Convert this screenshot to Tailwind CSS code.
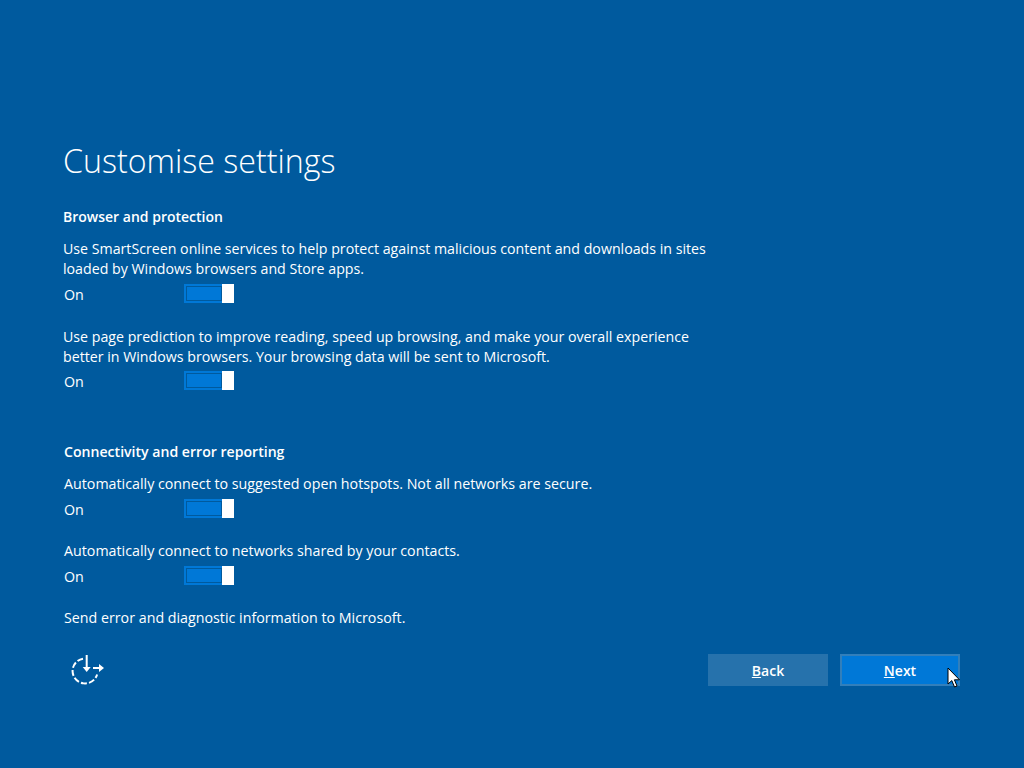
<!DOCTYPE html>
<html lang="en-GB">
<head>
  <meta charset="UTF-8">
  <title>Customise settings</title>
  <script src="https://cdn.jsdelivr.net/npm/@tailwindcss/browser@4"></script>
</head>
<body class="bg-[#005a9e] text-white font-['Open_Sans','Noto_Sans',sans-serif] w-[1024px] h-[768px] overflow-hidden relative">
  <div class="pt-[139px] pl-[63px] w-[723px]">
    <h1 class="text-[32.2px] leading-[44px] font-light">Customise settings</h1>

    <!-- Browser and protection -->
    <h2 class="mt-[24px] text-[14px] leading-[20px] font-semibold">Browser and protection</h2>
    <p class="mt-[12px] text-[14.2px] leading-[20px]">Use SmartScreen online services to help protect against malicious content and downloads in sites loaded by Windows browsers and Store apps.</p>
    <div class="flex items-start h-[20px] mt-[5px]">
      <span class="w-[121px] pt-px text-[14.25px] leading-[20px] pl-px">On</span>
      <div class="w-[50px] h-[19px] flex border-2 border-[#0078d7] border-r-0">
        <div class="flex-1 bg-[#0078d7] border border-[#005a9e]"></div>
        <div class="w-[12px] bg-white -my-[2px]"></div>
      </div>
    </div>
    <p class="mt-[23px] text-[14.2px] leading-[20px]">Use page prediction to improve reading, speed up browsing, and make your overall experience better in Windows browsers. Your browsing data will be sent to Microsoft.</p>
    <div class="flex items-start h-[20px] mt-[4px]">
      <span class="w-[121px] pt-px text-[14.25px] leading-[20px] pl-px">On</span>
      <div class="w-[50px] h-[19px] flex border-2 border-[#0078d7] border-r-0">
        <div class="flex-1 bg-[#0078d7] border border-[#005a9e]"></div>
        <div class="w-[12px] bg-white -my-[2px]"></div>
      </div>
    </div>

    <!-- Connectivity and error reporting -->
    <div class="pl-px">
      <h2 class="mt-[51px] text-[14.1px] leading-[20px] font-semibold">Connectivity and error reporting</h2>
      <p class="mt-[12px] text-[14.25px] leading-[20px]">Automatically connect to suggested open hotspots. Not all networks are secure.</p>
      <div class="flex items-start h-[20px] mt-[5px]">
        <span class="w-[120px] pt-px text-[14.25px] leading-[20px]">On</span>
        <div class="w-[50px] h-[19px] flex border-2 border-[#0078d7] border-r-0">
          <div class="flex-1 bg-[#0078d7] border border-[#005a9e]"></div>
          <div class="w-[12px] bg-white -my-[2px]"></div>
        </div>
      </div>
      <p class="mt-[22px] text-[14.25px] leading-[20px]">Automatically connect to networks shared by your contacts.</p>
      <div class="flex items-start h-[20px] mt-[5px]">
        <span class="w-[120px] pt-px text-[14.25px] leading-[20px]">On</span>
        <div class="w-[50px] h-[19px] flex border-2 border-[#0078d7] border-r-0">
          <div class="flex-1 bg-[#0078d7] border border-[#005a9e]"></div>
          <div class="w-[12px] bg-white -my-[2px]"></div>
        </div>
      </div>
      <p class="mt-[22px] text-[14.25px] leading-[20px]">Send error and diagnostic information to Microsoft.</p>
    </div>
  </div>

  <!-- Footer -->
  <div class="absolute left-[63px] right-[64px] top-[654px] h-[32px] flex items-center">
    <svg class="w-[44px] h-[32px]" viewBox="0 0 44 32" fill="none" stroke="white" stroke-width="2">
      <path d="M20 4.66A12.5 12.5 0 1 0 34.1 20.4" stroke-dasharray="6 2.2"/>
      <path d="M23.7 1V15"/>
      <path d="M19.7 13H27.7L23.7 18Z" fill="white" stroke="none"/>
      <path d="M30 14H38"/>
      <path d="M36 10V18L41 14Z" fill="white" stroke="none"/>
    </svg>
    <button class="ml-auto w-[120px] h-[32px] bg-white/15 text-[14px] font-semibold"><u>B</u>ack</button>
    <button class="ml-[12px] w-[120px] h-[32px] bg-[#0078d7] bg-clip-padding border-2 border-[#327fbb] text-[14px] font-semibold"><u>N</u>ext</button>
  </div>

  <!-- Cursor -->
  <svg class="absolute left-[947px] top-[667px]" width="14" height="22" viewBox="0 0 14 22">
    <path d="M1 1V17L4.8 13.6L7.5 20L10 19L7.4 12.8H12.5Z" fill="white" stroke="black" stroke-width="1"/>
  </svg>
</body>
</html>
